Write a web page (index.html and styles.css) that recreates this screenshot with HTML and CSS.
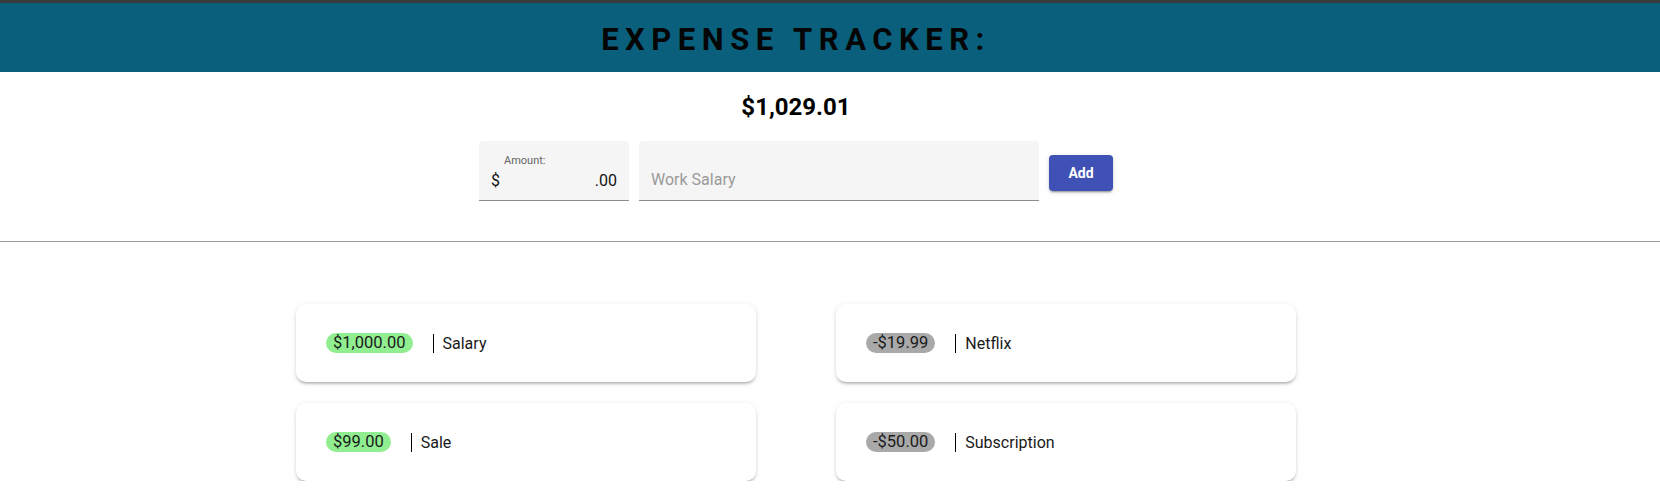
FILE: index.html
```html
<!DOCTYPE html>
<html>
<head>
<meta charset="utf-8">
<link rel="stylesheet" href="styles.css">
</head>
<body>
<div class="topbar"></div>
<header class="header">
  <h1 class="title">EXPENSE TRACKER:</h1>
</header>
<section class="summary">
  <div class="total">$1,029.01</div>
  <form class="form">
    <div class="field amount">
      <span class="label">Amount:</span>
      <div class="value-row">
        <span class="prefix">$</span>
        <span class="suffix">.00</span>
      </div>
    </div>
    <div class="field desc">
      <span class="placeholder">Work Salary</span>
    </div>
    <button type="button" class="add">Add</button>
  </form>
</section>
<hr class="divider">
<main class="list">
  <div class="card"><span class="pill income">$1,000.00</span><span class="name">Salary</span></div>
  <div class="card"><span class="pill expense">-$19.99</span><span class="name">Netflix</span></div>
  <div class="card"><span class="pill income">$99.00</span><span class="name">Sale</span></div>
  <div class="card"><span class="pill expense">-$50.00</span><span class="name">Subscription</span></div>
</main>
</body>
</html>
```
FILE: styles.css
```css
* { box-sizing: border-box; }
html, body { margin: 0; padding: 0; background: #fff; }
body {
  font-family: Roboto, "Liberation Sans", Arial, sans-serif;
  color: #212121;
  overflow: hidden;
}
.topbar { height: 3px; background: #3a3b3d; }
.header {
  height: 69px;
  background: #0a607c;
  display: flex;
  align-items: center;
  justify-content: center;
  padding-right: 68px;
  padding-top: 3px;
}
.title {
  margin: 0;
  font-size: 31px;
  font-weight: 700;
  letter-spacing: 0.21em;
  color: #050505;
  line-height: 1;
}
.summary {
  padding-right: 68px;
  display: flex;
  flex-direction: column;
  align-items: center;
}
.total {
  margin-top: 21px;
  font-size: 24px;
  font-weight: 700;
  line-height: 28px;
  color: #000;
}
.form {
  margin-top: 20px;
  display: flex;
  align-items: center;
  gap: 10px;
}
.field {
  height: 60px;
  background: #f5f5f5;
  border-radius: 4px 4px 0 0;
  border-bottom: 1px solid #8c8c8c;
  padding: 0 12px;
}
.amount {
  width: 150px;
  display: flex;
  flex-direction: column;
  padding-top: 13px;
}
.label {
  font-size: 11px;
  line-height: 14px;
  color: #666;
  padding-left: 13px;
}
.value-row {
  display: flex;
  justify-content: space-between;
  font-size: 16px;
  line-height: 22px;
  color: #111;
  margin-top: 2px;
}
.desc {
  width: 400px;
  display: flex;
  align-items: center;
  padding-top: 18px;
}
.placeholder {
  font-size: 16px;
  color: #9a9a9a;
}
.add {
  width: 64px;
  height: 36px;
  border: none;
  border-radius: 4px;
  background: #3f51b5;
  color: #fff;
  font-family: Roboto, "Liberation Sans", Arial, sans-serif;
  font-size: 14px;
  font-weight: 700;
  box-shadow: 0 3px 1px -2px rgba(0,0,0,.2), 0 2px 2px 0 rgba(0,0,0,.14), 0 1px 5px 0 rgba(0,0,0,.12);
  margin-top: 3px;
}
.divider {
  margin: 40px 0 0;
  border: none;
  border-top: 1px solid #9a9a9a;
  height: 0;
}
.list {
  width: 1000px;
  margin: 62px 0 0 296px;
  display: grid;
  grid-template-columns: 460px 460px;
  column-gap: 80px;
  row-gap: 21px;
}
.card {
  height: 78px;
  border-radius: 10px;
  background: #fff;
  padding: 0 30px;
  display: flex;
  align-items: center;
  box-shadow: 0 3px 3px -2px rgba(0,0,0,.2), 0 2px 3px 0 rgba(0,0,0,.12), 0 1px 6px 0 rgba(0,0,0,.08);
  font-size: 16px;
}
.pill {
  line-height: 20px;
  padding: 0 7px;
  border-radius: 10px;
  color: #1a1a1a;
  font-size: 16.5px;
}
.income { background: #90ee90; }
.expense { background: #a9a9a9; }
.name {
  margin-left: 20px;
  border-left: 1px solid #000;
  padding-left: 9px;
  line-height: 19px;
  color: #1a1a1a;
}
```
